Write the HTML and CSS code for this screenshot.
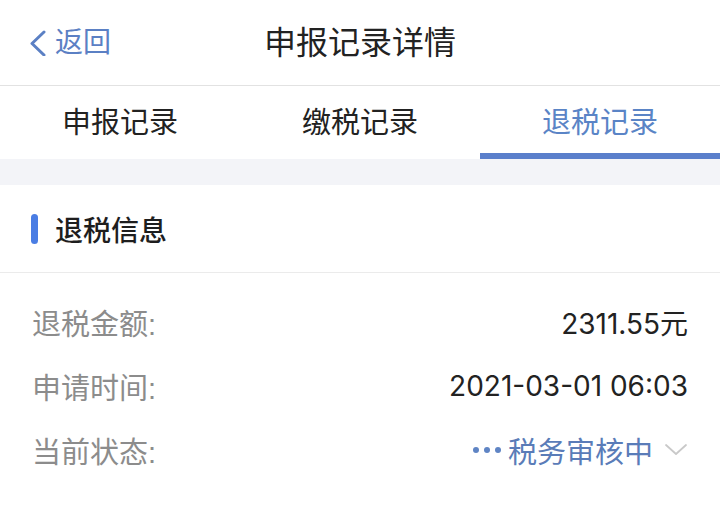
FILE: index.html
```html
<!DOCTYPE html>
<html lang="zh-CN">
<head>
<meta charset="utf-8">
<title>申报记录详情</title>
<link rel="stylesheet" href="styles.css">
</head>
<body>
<header class="nav">
  <a class="back" href="#">
    <svg class="back-icon" width="18" height="26" viewBox="0 0 18 26"><polyline points="15,2 3,13.5 15,25" fill="none" stroke="#5b80c4" stroke-width="3" stroke-linecap="round" stroke-linejoin="round"/></svg>
    <span>返回</span>
  </a>
  <h1 class="title">申报记录详情</h1>
  <span></span>
</header>
<nav class="tabs">
  <div class="tab">申报记录</div>
  <div class="tab">缴税记录</div>
  <div class="tab active">退税记录</div>
</nav>
<div class="gap"></div>
<section class="card">
  <div class="card-head"><span class="bar"></span><span class="card-title">退税信息</span></div>
  <div class="rows">
    <div class="row"><span class="label">退税金额:</span><span class="value">2311.55元</span></div>
    <div class="row"><span class="label">申请时间:</span><span class="value">2021-03-01 06:03</span></div>
    <div class="row"><span class="label">当前状态:</span>
      <span class="status">
        <span class="dots"><i></i><i></i><i></i></span>
        <span class="status-text">税务审核中</span>
        <svg class="chev" width="24" height="14" viewBox="0 0 24 14"><polyline points="2,2 12,11 22,2" fill="none" stroke="#c9c9c9" stroke-width="1.8" stroke-linecap="round" stroke-linejoin="round"/></svg>
      </span>
    </div>
  </div>
</section>
</body>
</html>
```
FILE: styles.css
```css
* { box-sizing: border-box; }
html, body { margin: 0; padding: 0; background: #fff; }
body {
  font-family: "Liberation Sans", "Noto Sans CJK SC", sans-serif;
  color: #222;
  width: 720px;
}
.nav {
  height: 86px;
  display: grid;
  grid-template-columns: 1fr auto 1fr;
  align-items: center;
  border-bottom: 1px solid #e2e2e2;
  padding-bottom: 6px;
}
.back {
  display: flex;
  align-items: center;
  gap: 8px;
  padding-left: 29px;
  color: #5b80c4;
  text-decoration: none;
  font-size: 28px;
}
.back-icon { margin-top: 6px; }
.title {
  margin: 0;
  font-size: 32px;
  font-weight: 400;
  color: #222;
}
.tabs {
  display: grid;
  grid-template-columns: repeat(3, 1fr);
  height: 73px;
}
.tab {
  display: flex;
  align-items: center;
  justify-content: center;
  font-size: 29px;
  color: #222;
  border-bottom: 6px solid transparent;
}
.tab.active {
  color: #5a84c6;
  border-bottom-color: #5a7fcb;
}
.gap { height: 26px; background: #f3f4f8; }
.card-head {
  height: 88px;
  display: flex;
  align-items: center;
  gap: 17px;
  padding-left: 31px;
  border-bottom: 1px solid #ebebeb;
}
.bar {
  width: 7px;
  height: 30px;
  border-radius: 4px;
  background: #4a7de4;
}
.card-title {
  font-size: 28px;
  font-weight: 500;
  color: #1e1e1e;
}
.rows { padding: 17px 32px 0 32px; }
.row {
  height: 64px;
  display: flex;
  align-items: center;
  justify-content: space-between;
}
.label { font-size: 29px; color: #8c8c8c; }
.value {
  font-family: "Inter", "Noto Sans CJK SC", sans-serif;
  font-variant-numeric: proportional-nums;
  font-size: 28px;
  color: #222;
}
.status { display: flex; align-items: center; }
.dots { display: flex; gap: 5px; margin-right: 7px; }
.dots i { width: 6px; height: 6px; border-radius: 50%; background: #5f84c4; }
.status-text { font-size: 29px; color: #5a7cb8; }
.chev { margin-left: 11px; }
```
